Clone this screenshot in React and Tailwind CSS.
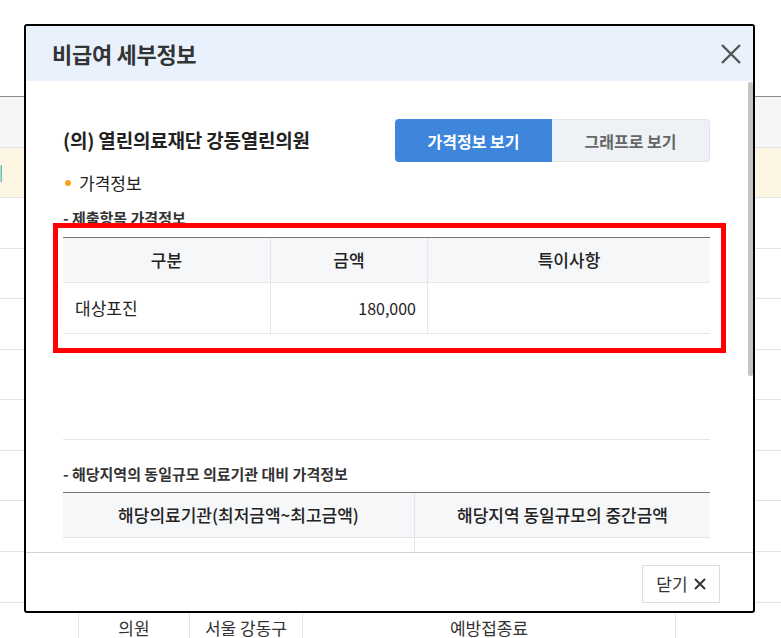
import React from 'react';

const font = { fontFamily: '"Noto Sans CJK KR", "Noto Sans", sans-serif' };

// background list rows (top border already drawn at y=96)
const rowHeights = [51, 50, 51, 50, 51, 50, 51, 50, 51, 51, 51];

function BackgroundTable() {
    return (
        <div className="pt-[96px]">
            <div className="border-t border-[#8c8c8c]">
                {rowHeights.map((h, i) => {
                    const bg = i === 0 ? 'bg-[#f5f6f8]' : i === 1 ? 'bg-[#fdf6e3]' : 'bg-white';
                    const isLast = i === 10;
                    return (
                        <div
                            key={i}
                            className={`flex border-b border-[#e4e4e4] ${bg}`}
                            style={{ height: h }}
                        >
                            <div className="w-[79px] flex items-center border-r border-[#e4e4e4]">
                                {i === 1 && (
                                    <div className="w-[3px] overflow-hidden flex justify-end">
                                        <span className="whitespace-nowrap text-[15px] text-[#23a3a8] underline">보기|</span>
                                    </div>
                                )}
                            </div>
                            <div className="w-[111px] flex items-center justify-center border-r border-[#e4e4e4] text-[17px] text-[#333]">
                                {isLast && '의원'}
                            </div>
                            <div className="w-[113px] flex items-center justify-center border-r border-[#e4e4e4] text-[17px] text-[#333]">
                                {isLast && '서울 강동구'}
                            </div>
                            <div className="w-[373px] flex items-center justify-center border-r border-[#e4e4e4] text-[17px] text-[#333]">
                                {isLast && '예방접종료'}
                            </div>
                            <div className="flex-1" />
                        </div>
                    );
                })}
            </div>
        </div>
    );
}

function PriceTable() {
    return (
        <div className="mt-[9px] border-t border-[#777]">
            <div className="flex h-[45px] bg-[#f5f7f9] border-b border-[#e3e6ea] text-[17px] font-medium text-[#222]">
                <div className="w-[208px] flex items-center justify-center border-r border-[#e3e6ea]">구분</div>
                <div className="w-[157px] flex items-center justify-center border-r border-[#e3e6ea]">금액</div>
                <div className="flex-1 flex items-center justify-center">특이사항</div>
            </div>
            <div className="flex h-[51px] border-b border-[#e3e6ea] text-[17px] text-[#222]">
                <div className="w-[208px] flex items-center pl-[12px] border-r border-[#e3e6ea]">대상포진</div>
                <div className="w-[157px] flex items-center justify-end pr-[11px] border-r border-[#e3e6ea] text-[16px]">180,000</div>
                <div className="flex-1" />
            </div>
        </div>
    );
}

function CompareTable() {
    return (
        <div className="mt-[8px] border-t border-[#777]">
            <div className="flex h-[45px] bg-[#f5f7f9] border-b border-[#e3e6ea] text-[17px] font-medium text-[#222]">
                <div className="w-[352px] flex items-center justify-center border-r border-[#e3e6ea]">해당의료기관(최저금액~최고금액)</div>
                <div className="flex-1 flex items-center justify-center">해당지역 동일규모의 중간금액</div>
            </div>
            <div className="flex h-[51px] border-b border-[#e3e6ea]">
                <div className="w-[352px] border-r border-[#e3e6ea]" />
                <div className="flex-1" />
            </div>
        </div>
    );
}

function DetailModal() {
    return (
        <div className="absolute left-[24px] top-[24px] w-[731px] h-[589px] border-2 border-black rounded-[3px] bg-white flex flex-col overflow-hidden">
            <div className="h-[55px] shrink-0 bg-[#e8f1fc] flex items-center justify-between pl-[26px] pr-[10px]">
                <h2 className="text-[22px] font-bold text-[#333] tracking-[-0.3px]">비급여 세부정보</h2>
                <svg width="22" height="22" viewBox="0 0 22 22" className="mr-[1px]">
                    <path d="M2 2L20 20M20 2L2 20" stroke="#555" strokeWidth="2.4" />
                </svg>
            </div>

            <div className="relative flex-1 overflow-hidden">
                <div className="pl-[37px] pr-[43px] pt-[38px]">
                    <div className="flex items-center justify-between">
                        <h3 className="text-[19px] font-bold text-[#222] tracking-[-0.2px]">(의) 열린의료재단 강동열린의원</h3>
                        <div className="flex">
                            <button className="w-[157px] h-[43px] rounded-l-[4px] bg-[#3d86dc] text-white text-[16px] font-bold">
                                가격정보 보기
                            </button>
                            <button className="w-[158px] h-[43px] rounded-r-[4px] bg-[#eef2f7] border border-l-0 border-[#e0e5eb] text-[#666] text-[16px] font-bold">
                                그래프로 보기
                            </button>
                        </div>
                    </div>

                    <div className="mt-[9px] flex items-center gap-[8px] h-[24px]">
                        <span className="ml-[2px] w-[6px] h-[6px] rounded-full bg-[#f6a21e]" />
                        <span className="text-[17px] text-[#222]">가격정보</span>
                    </div>

                    <div className="mt-[13px] h-[20px] flex items-center text-[15px] font-bold text-[#333]">- 제출항목 가격정보</div>
                    <PriceTable />

                    <div className="h-[106px] border-b border-[#e6e6e6]" />

                    <div className="mt-[24px] h-[20px] flex items-center text-[15px] font-bold text-[#333]">- 해당지역의 동일규모 의료기관 대비 가격정보</div>
                    <CompareTable />
                </div>

                {/* scrollbar thumb */}
                <div className="absolute right-0 top-[1px] w-[5px] h-[294px] rounded-[3px] bg-[#c4c4c4]" />
            </div>

            <div className="h-[59px] shrink-0 border-t border-[#d2d2d2] flex items-start justify-end pt-[12px] pr-[33px]">
                <button className="w-[78px] h-[38px] border border-[#dcdcdc] bg-white flex items-center justify-center gap-[6px] text-[17px] text-[#333]">
                    닫기
                    <svg width="12" height="12" viewBox="0 0 12 12">
                        <path d="M1 1L11 11M11 1L1 11" stroke="#333" strokeWidth="2" />
                    </svg>
                </button>
            </div>
        </div>
    );
}

export default function App() {
    return (
        <div className="relative w-[781px] h-[638px] overflow-hidden bg-white" style={font}>
            <BackgroundTable />
            <DetailModal />
            {/* red highlight annotation */}
            <div className="absolute left-[53px] top-[223px] w-[673px] h-[130px] border-[5px] border-[#ff0000]" />
        </div>
    );
}
